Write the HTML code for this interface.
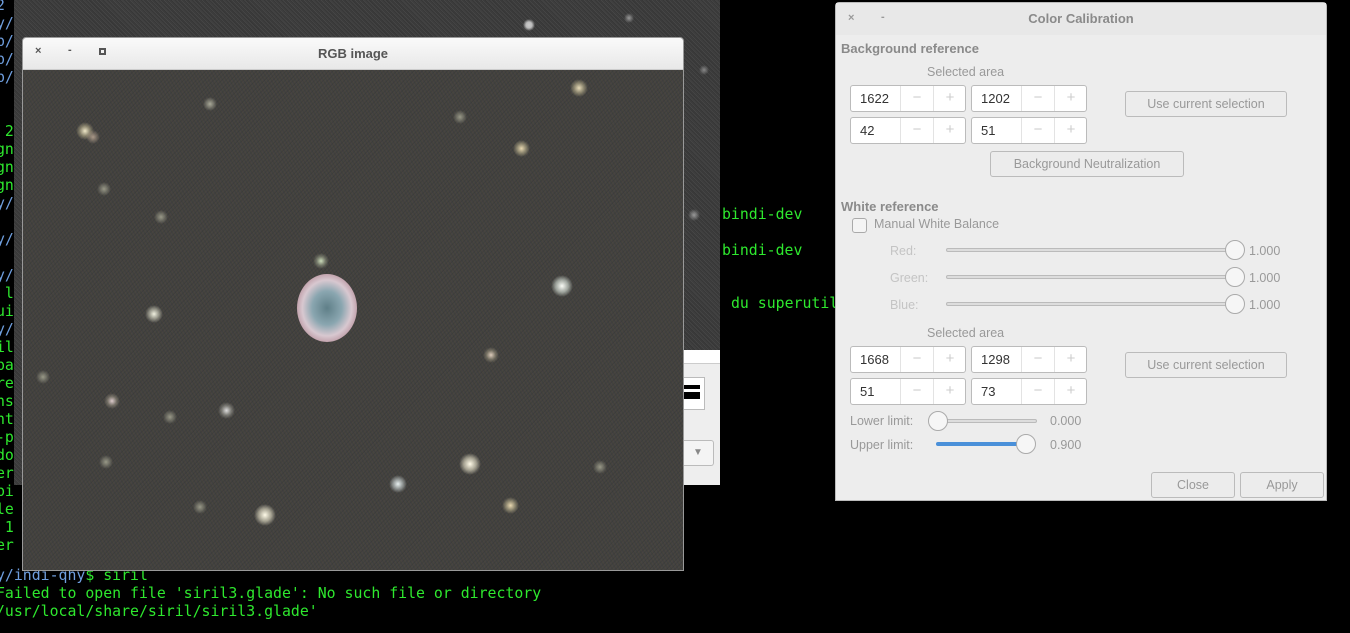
<!DOCTYPE html>
<html><head><meta charset="utf-8"><style>
*{box-sizing:border-box;margin:0;padding:0}
body{width:1350px;height:633px;background:#000;position:relative;overflow:hidden;font-family:"Liberation Sans",sans-serif}
.term{position:absolute;font-family:"DejaVu Sans Mono","Liberation Mono",monospace;font-size:14.85px;color:#2ee82e;white-space:pre;line-height:18px}
.blue{color:#6f9fdf}
.bgwin{position:absolute;left:14px;top:0;width:706px;height:485px;background:#3c3c3c;
background-image:radial-gradient(circle at 515px 25px,#ccc 0,#bbb 3px,transparent 6px),radial-gradient(circle at 615px 18px,#999 0,transparent 5px),radial-gradient(circle at 690px 70px,#888 0,transparent 5px),radial-gradient(circle at 680px 215px,#999 0,transparent 6px),repeating-linear-gradient(45deg,#444 0,#333 1px,#4a4a4a 2px,#303030 3px),repeating-linear-gradient(-30deg,transparent 0,rgba(90,90,90,.4) 1px,transparent 3px)}
.rgb{position:absolute;left:22px;top:37px;width:662px;height:534px;border:1px solid #999;background:#eee;border-radius:4px 4px 0 0}
.rgb .tb{height:32px;background:linear-gradient(#fafafa,#e8e8e8);border-bottom:1px solid #ccc;position:relative;border-radius:4px 4px 0 0}
.tbt{position:absolute;width:100%;text-align:center;top:8px;font-weight:bold;font-size:13px;color:#555}
.img{position:absolute;left:0;top:32px;width:660px;height:500px;background:#43423f;overflow:hidden;
background-image:repeating-linear-gradient(60deg,rgba(70,62,80,.35) 0,rgba(50,60,50,.35) 1px,rgba(80,70,60,.3) 2px,transparent 3px),repeating-linear-gradient(-45deg,rgba(40,40,50,.35) 0,transparent 1px,rgba(90,85,80,.2) 2px,transparent 3px)}
.star{position:absolute;border-radius:50%}
.cc{position:absolute;left:835px;top:2px;width:492px;height:499px;background:#ededed;border:1px solid #bbb;border-radius:4px 4px 0 0;color:#999;font-size:12.5px}
.cc .tb{height:32px;background:#e8e8e8;position:relative}
.a{position:absolute;white-space:nowrap}
.b{font-weight:bold;color:#8a8a8a;font-size:13px}
.spin{position:absolute;width:116px;height:27px;background:#fff;border:1px solid #bbb;border-radius:3px;font-size:13px;color:#333}
.spin span{position:absolute;top:5px;left:9px}
.spin i{position:absolute;top:0;width:33px;height:25px;border-left:1px solid #e3e3e3;font-style:normal;color:#ccc;text-align:center;line-height:24px;font-size:15px}
.btn{position:absolute;height:26px;border:1px solid #bbb;border-radius:3px;background:#ececec;text-align:center;line-height:24px;color:#999;font-size:12.5px}
.track{position:absolute;height:4px;background:#ddd;border:1px solid #bbb;border-radius:2px}
.knob{position:absolute;width:20px;height:20px;border-radius:50%;background:#f6f6f6;border:1px solid #aaa}
</style></head><body>
<div class="term" style="left:-4px;top:-4px"><span class="blue">2
y/
p/
p/
p/</span>


 2.
gn
gn
gn
<span class="blue">y/</span>

<span class="blue">y/</span>

<span class="blue">y/</span>
 l
ui
<span class="blue">y/</span>
il
pa
re
ns
nt
-p
do
er
bi
le
 1
er</div>
<div class="bgwin"></div>
<div style="position:absolute;left:683px;top:350px;width:37px;height:135px;background:#eee"></div>
<div style="position:absolute;left:683px;top:350px;width:37px;height:14px;background:#fff;border-bottom:1px solid #ccc"></div>
<div style="position:absolute;left:683px;top:377px;width:22px;height:33px;background:#fff;border:1px solid #bbb"><div style="margin:7px 0 0 0;width:16px;height:14px;border-top:4px solid #000;border-bottom:4px solid #000;position:relative"><div style="position:absolute;top:3px;width:16px;height:3px;background:#000"></div></div></div>
<div style="position:absolute;left:683px;top:440px;width:31px;height:26px;border:1px solid #bbb;border-left:none;border-radius:0 3px 3px 0;background:#f4f4f4;color:#888;font-size:10px;text-align:center;line-height:24px">▼</div>
<div class="term" style="left:-4px;top:566px"><span class="blue">y/indi-qhy</span>$ siril
Failed to open file 'siril3.glade': No such file or directory
/usr/local/share/siril/siril3.glade'</div>
<div class="term" style="left:722px;top:205px">bindi-dev</div>
<div class="term" style="left:722px;top:241px">bindi-dev</div>
<div class="term" style="left:731px;top:294px">du superutil</div>

<div class="rgb"><div class="tb"><div class="a" style="left:12px;top:7px;font-size:11px;color:#555;font-weight:bold">×</div><div class="a" style="left:45px;top:6px;font-size:11px;color:#555;font-weight:bold">-</div><div class="a" style="left:76px;top:10px;width:7px;height:7px;border:2px solid #555"></div><div class="tbt">RGB image</div></div>
<div class="img">
<div style="position:absolute;left:274px;top:204px;width:60px;height:68px;border-radius:50%;background:radial-gradient(ellipse,#5f7f88 0,#8aa6b0 35%,#d8c8d0 58%,#c0a0aa 72%,rgba(120,90,100,.4) 85%,transparent 100%)"></div>
<div class="star" style="left:53px;top:52px;width:18px;height:18px;background:radial-gradient(#f0e8c8,rgba(200,190,150,.5) 40%,transparent 70%)"></div>
<div class="star" style="left:547px;top:9px;width:18px;height:18px;background:radial-gradient(#e8dcb8,rgba(200,190,150,.5) 40%,transparent 70%)"></div>
<div class="star" style="left:528px;top:205px;width:22px;height:22px;background:radial-gradient(#fafcf6,rgba(220,230,220,.6) 40%,transparent 70%)"></div>
<div class="star" style="left:122px;top:235px;width:18px;height:18px;background:radial-gradient(#f0f0e0,rgba(220,220,200,.5) 40%,transparent 70%)"></div>
<div class="star" style="left:436px;top:383px;width:22px;height:22px;background:radial-gradient(#fffbe8,rgba(230,225,200,.6) 40%,transparent 70%)"></div>
<div class="star" style="left:231px;top:434px;width:22px;height:22px;background:radial-gradient(#fffbe8,rgba(230,225,200,.6) 40%,transparent 70%)"></div>
<div class="star" style="left:366px;top:405px;width:18px;height:18px;background:radial-gradient(#e8f0f0,rgba(210,220,220,.5) 40%,transparent 70%)"></div>
<div class="star" style="left:490px;top:70px;width:17px;height:17px;background:radial-gradient(#e8d8b0,rgba(200,190,150,.5) 40%,transparent 70%)"></div>
<div class="star" style="left:479px;top:427px;width:17px;height:17px;background:radial-gradient(#e8d8b0,rgba(200,190,150,.5) 40%,transparent 70%)"></div>
<div class="star" style="left:195px;top:332px;width:17px;height:17px;background:radial-gradient(#ddd,rgba(200,200,190,.4) 40%,transparent 70%)"></div>
<div class="star" style="left:81px;top:323px;width:16px;height:16px;background:radial-gradient(#dcc,rgba(190,180,160,.4) 40%,transparent 70%)"></div>
<div class="star" style="left:290px;top:183px;width:16px;height:16px;background:radial-gradient(#cdb,rgba(180,190,160,.4) 40%,transparent 70%)"></div>
<div class="star" style="left:460px;top:277px;width:16px;height:16px;background:radial-gradient(#dcb,rgba(190,180,150,.4) 40%,transparent 70%)"></div>
<div class="star" style="left:63px;top:60px;width:14px;height:14px;background:radial-gradient(#a98,transparent 70%)"></div>
<div class="star" style="left:74px;top:112px;width:14px;height:14px;background:radial-gradient(#998,transparent 70%)"></div>
<div class="star" style="left:131px;top:140px;width:14px;height:14px;background:radial-gradient(#998,transparent 70%)"></div>
<div class="star" style="left:180px;top:27px;width:14px;height:14px;background:radial-gradient(#aa9,transparent 70%)"></div>
<div class="star" style="left:13px;top:300px;width:14px;height:14px;background:radial-gradient(#998,transparent 70%)"></div>
<div class="star" style="left:140px;top:340px;width:14px;height:14px;background:radial-gradient(#998,transparent 70%)"></div>
<div class="star" style="left:76px;top:385px;width:14px;height:14px;background:radial-gradient(#998,transparent 70%)"></div>
<div class="star" style="left:170px;top:430px;width:14px;height:14px;background:radial-gradient(#998,transparent 70%)"></div>
<div class="star" style="left:570px;top:390px;width:14px;height:14px;background:radial-gradient(#998,transparent 70%)"></div>
<div class="star" style="left:430px;top:40px;width:14px;height:14px;background:radial-gradient(#998,transparent 70%)"></div>
</div></div>

<div class="cc"><div class="tb"><div class="a" style="left:12px;top:9px;font-size:11px;font-weight:bold">×</div><div class="a" style="left:45px;top:8px;font-size:11px;font-weight:bold">-</div><div class="tbt" style="color:#8a8a8a">Color Calibration</div></div>
<div class="a b" style="left:5px;top:38px">Background reference</div>
<div class="a" style="left:91px;top:62px">Selected area</div>
<div class="spin" style="left:14px;top:82px"><span>1622</span><i style="left:49px">−</i><i style="left:82px">+</i></div>
<div class="spin" style="left:135px;top:82px"><span>1202</span><i style="left:49px">−</i><i style="left:82px">+</i></div>
<div class="spin" style="left:14px;top:114px"><span>42</span><i style="left:49px">−</i><i style="left:82px">+</i></div>
<div class="spin" style="left:135px;top:114px"><span>51</span><i style="left:49px">−</i><i style="left:82px">+</i></div>
<div class="btn" style="left:289px;top:88px;width:162px">Use current selection</div>
<div class="btn" style="left:154px;top:148px;width:194px">Background Neutralization</div>
<div class="a b" style="left:5px;top:196px">White reference</div>
<div class="a" style="left:16px;top:215px;width:15px;height:15px;border:1px solid #aaa;border-radius:3px;background:#f4f4f4"></div>
<div class="a" style="left:38px;top:214px">Manual White Balance</div>
<div class="a" style="left:54px;top:241px;color:#c4c4c4">Red:</div>
<div class="a" style="left:54px;top:268px;color:#c4c4c4">Green:</div>
<div class="a" style="left:54px;top:295px;color:#c4c4c4">Blue:</div>
<div class="track" style="left:110px;top:245px;width:290px"></div>
<div class="track" style="left:110px;top:272px;width:290px"></div>
<div class="track" style="left:110px;top:299px;width:290px"></div>
<div class="knob" style="left:389px;top:237px"></div>
<div class="knob" style="left:389px;top:264px"></div>
<div class="knob" style="left:389px;top:291px"></div>
<div class="a" style="left:413px;top:241px">1.000</div>
<div class="a" style="left:413px;top:268px">1.000</div>
<div class="a" style="left:413px;top:295px">1.000</div>
<div class="a" style="left:91px;top:323px">Selected area</div>
<div class="spin" style="left:14px;top:343px"><span>1668</span><i style="left:49px">−</i><i style="left:82px">+</i></div>
<div class="spin" style="left:135px;top:343px"><span>1298</span><i style="left:49px">−</i><i style="left:82px">+</i></div>
<div class="spin" style="left:14px;top:375px"><span>51</span><i style="left:49px">−</i><i style="left:82px">+</i></div>
<div class="spin" style="left:135px;top:375px"><span>73</span><i style="left:49px">−</i><i style="left:82px">+</i></div>
<div class="btn" style="left:289px;top:349px;width:162px">Use current selection</div>
<div class="a" style="left:14px;top:411px">Lower limit:</div>
<div class="a" style="left:14px;top:435px">Upper limit:</div>
<div class="track" style="left:93px;top:416px;width:108px"></div>
<div class="knob" style="left:92px;top:408px"></div>
<div style="position:absolute;left:100px;top:439px;width:90px;height:4px;background:#4a90d9;border-radius:2px"></div>
<div class="knob" style="left:180px;top:431px"></div>
<div class="a" style="left:214px;top:411px">0.000</div>
<div class="a" style="left:214px;top:435px">0.900</div>
<div class="btn" style="left:315px;top:469px;width:84px">Close</div>
<div class="btn" style="left:404px;top:469px;width:84px">Apply</div>
</div>
</body></html>
